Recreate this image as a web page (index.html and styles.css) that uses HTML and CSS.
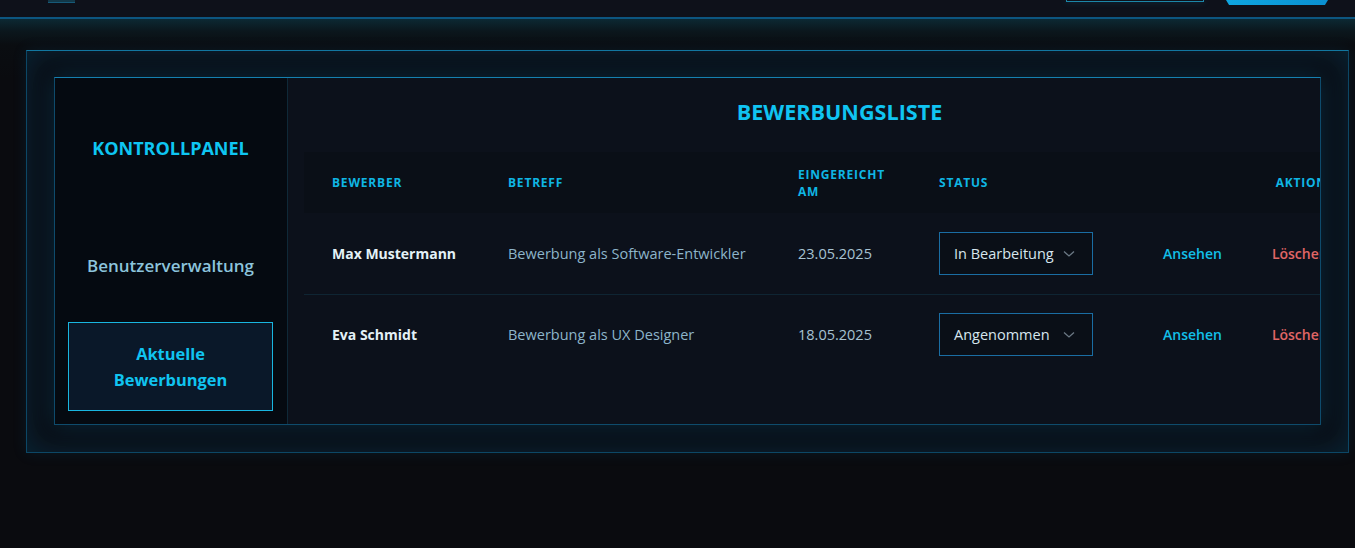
FILE: index.html
```html
<!DOCTYPE html>
<html lang="de">
<head>
<meta charset="utf-8">
<title>Bewerbungsliste</title>
<link rel="stylesheet" href="styles.css">
</head>
<body>
<header class="topbar">
  <div class="logo-box"></div>
  <div class="top-actions">
    <div class="btn-outline"></div>
    <div class="btn-filled"></div>
  </div>
</header>
<main class="page">
  <section class="panel">
    <div class="dashboard">
      <aside class="sidebar">
        <h2 class="side-title">KONTROLLPANEL</h2>
        <nav class="side-nav">
          <a class="nav-item">Benutzerverwaltung</a>
          <a class="nav-item active">Aktuelle Bewerbungen</a>
        </nav>
      </aside>
      <div class="content">
        <div class="content-inner">
          <h1 class="list-title">BEWERBUNGSLISTE</h1>
          <table class="apps">
            <colgroup>
              <col class="c-name"><col class="c-subj"><col class="c-date"><col class="c-status"><col class="c-act">
            </colgroup>
            <thead>
              <tr>
                <th>BEWERBER</th>
                <th>BETREFF</th>
                <th>EINGEREICHT AM</th>
                <th>STATUS</th>
                <th class="th-act">AKTIONEN</th>
              </tr>
            </thead>
            <tbody>
              <tr>
                <td class="name">Max Mustermann</td>
                <td class="subj">Bewerbung als Software-Entwickler</td>
                <td class="date">23.05.2025</td>
                <td><div class="select"><span>In Bearbeitung</span><svg width="12" height="8" viewBox="0 0 12 8"><path d="M1 1.5 L6 6 L11 1.5" fill="none" stroke="#6b7884" stroke-width="1.3"/></svg></div></td>
                <td class="acts"><a class="view">Ansehen</a><a class="del">Löschen</a></td>
              </tr>
              <tr>
                <td class="name">Eva Schmidt</td>
                <td class="subj">Bewerbung als UX Designer</td>
                <td class="date">18.05.2025</td>
                <td><div class="select"><span>Angenommen</span><svg width="12" height="8" viewBox="0 0 12 8"><path d="M1 1.5 L6 6 L11 1.5" fill="none" stroke="#6b7884" stroke-width="1.3"/></svg></div></td>
                <td class="acts"><a class="view">Ansehen</a><a class="del">Löschen</a></td>
              </tr>
            </tbody>
          </table>
        </div>
      </div>
    </div>
  </section>
</main>
</body>
</html>
```

FILE: styles.css
```css
* { box-sizing: border-box; }

html, body {
  margin: 0;
  padding: 0;
  background: #0a0b0f;
  font-family: "Open Sans", "Noto Sans", "DejaVu Sans", sans-serif;
  overflow: hidden;
}

.topbar {
  height: 19px;
  background: #0e111a;
  border-bottom: 2px solid #0c5680;
  display: flex;
  justify-content: space-between;
  align-items: flex-start;
  padding: 0 27px 0 48px;
  overflow: hidden;
}

.logo-box {
  width: 27px;
  height: 3px;
  background: #123848;
  border-bottom: 1px solid #165a78;
}

.top-actions {
  display: flex;
  gap: 22px;
  align-items: flex-start;
}

.btn-outline {
  width: 138px;
  height: 2px;
  border: 1px solid #1c86a8;
  border-top: none;
  box-shadow: 0 0 6px rgba(20, 140, 190, 0.35);
}

.btn-filled {
  width: 102px;
  height: 5px;
  background: linear-gradient(90deg, #0fa6e0, #0a8fd0);
  clip-path: polygon(0 0, 100% 0, 97% 100%, 3% 100%);
}

.page {
  padding: 31px 6px 0 26px;
  height: 529px;
  background: linear-gradient(180deg, #0c2933 0px, #0b171d 12px, #0a0d11 26px, #0a0b0f 60px);
}

.panel {
  border: 1px solid #0c4766;
  border-top-color: #1277a0;
  background: #0a0e15;
  padding: 26px 27px 27px 27px;
  box-shadow: inset 0 0 30px rgba(0, 130, 190, 0.2), 0 0 14px rgba(0, 120, 180, 0.12);
}

.dashboard {
  display: grid;
  grid-template-columns: 233px 1fr;
  border: 1px solid #0e4b6c;
  border-top-color: #1580b0;
  height: 348px;
  overflow: hidden;
  box-shadow: 0 0 20px rgba(0, 140, 200, 0.22);
}

.sidebar {
  background: #050a11;
  border-right: 1px solid #0f2938;
  padding: 13px 14px 13px 13px;
  display: flex;
  flex-direction: column;
}

.side-title {
  margin: 45px 0 0;
  font-size: 18px;
  line-height: 24px;
  font-weight: 700;
  color: #0ec6f2;
  text-align: center;
}

.side-nav {
  display: flex;
  flex-direction: column;
  gap: 12px;
  margin-top: 61px;
}

.nav-item {
  height: 89px;
  display: flex;
  align-items: center;
  justify-content: center;
  text-align: center;
  font-size: 17px;
  line-height: 26px;
  font-weight: 600;
  color: #8cc4dc;
  border: 1px solid transparent;
  padding: 0 40px;
}

.nav-item.active {
  color: #10c4f0;
  font-weight: 700;
  font-size: 16.4px;
  background: #0a1829;
  border-color: #19b6e0;
}

.content {
  background: #0c111b;
  padding: 20px 0 0 16px;
  min-width: 0;
  overflow: hidden;
}

.content-inner {
  width: 1071px;
}

.list-title {
  margin: 0 0 26px;
  font-size: 21.6px;
  line-height: 28px;
  font-weight: 700;
  color: #10c4f2;
  text-align: center;
}

.apps {
  border-collapse: collapse;
  table-layout: fixed;
  width: 1061px;
}

.c-name { width: 176px; }
.c-subj { width: 290px; }
.c-date { width: 141px; }
.c-status { width: 224px; }
.c-act { width: 230px; }

.apps thead tr {
  background: #0a0f17;
  height: 61px;
}

.apps th {
  text-align: left;
  font-size: 12px;
  line-height: 17px;
  font-weight: 700;
  letter-spacing: 0.8px;
  color: #0fb6e4;
  padding: 13px 28px;
  vertical-align: middle;
}

.apps th.th-act {
  text-align: right;
  padding-right: 20px;
}

.apps tbody tr {
  height: 81px;
  border-bottom: 1px solid #0f2533;
}

.apps tbody tr:last-child {
  border-bottom: none;
  height: 80px;
}

.apps td {
  padding: 1px 28px 0;
  font-size: 14.5px;
  vertical-align: middle;
  white-space: nowrap;
}

.name {
  color: #e4f1f7;
  font-weight: 700;
  font-size: 14px !important;
}

.subj {
  color: #8db5ca;
}

.date {
  color: #a6c2d2;
}

.select {
  width: 154px;
  height: 43px;
  border: 1px solid #1a6da3;
  background: #0a0f17;
  display: flex;
  align-items: center;
  justify-content: space-between;
  padding: 0 17px 0 14px;
  color: #d6e6ee;
  font-size: 14.5px;
}

.acts a {
  font-weight: 600;
  font-size: 14px;
}

.view {
  color: #12bfe8;
}

.del {
  color: #e06666;
  margin-left: 50px;
}
```
